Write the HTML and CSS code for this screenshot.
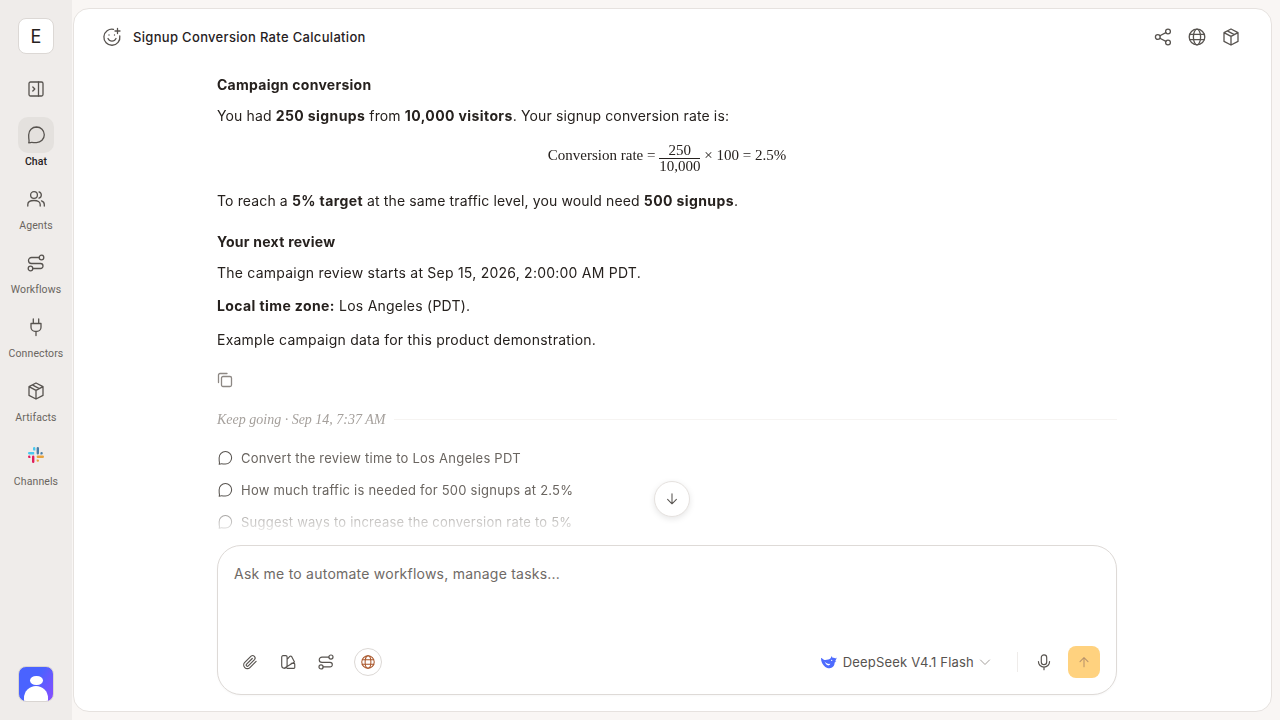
FILE: index.html
```html
<!DOCTYPE html>
<html lang="en">
<head>
    <meta charset="UTF-8">
    <title>Signup Conversion Rate Calculation</title>
    <link rel="stylesheet" href="styles.css">
</head>
<body>
    <aside class="sidebar">
        <div class="brand">E</div>
        <button class="toggle">
            <svg class="icon" viewBox="0 0 20 20"><rect x="3" y="3" width="14" height="14" rx="1.500"/><path d="M12.500 3v14M6.800 8l2 2-2 2"/></svg>
        </button>
        <nav class="nav">
            <div class="nav-item active">
                <div class="nav-icon"><svg class="icon" viewBox="0 0 20 20"><path d="M10.500 2a7.800 7.800 0 0 1 0 15.600c-1.200 0-3.800-.1-4.800-.3-.8-.1-3 .6-3 .6s.6-1.900.3-2.900C2.600 13.700 2.700 11.200 2.700 9.800A7.800 7.800 0 0 1 10.500 2z"/></svg></div>
                <span>Chat</span>
            </div>
            <div class="nav-item">
                <div class="nav-icon"><svg class="icon" viewBox="0 0 20 20"><circle cx="8" cy="6" r="3.400"/><path d="M1.800 17v-1.500c0-2.700 2.400-4 6.200-4s6.200 1.300 6.200 4V17M13 2.900a3.300 3.300 0 0 1 0 6.300M15.500 11.800c1.800.6 2.800 1.800 2.800 3.700V17"/></svg></div>
                <span>Agents</span>
            </div>
            <div class="nav-item">
                <div class="nav-icon"><svg class="icon" viewBox="0 0 20 20"><circle cx="15.500" cy="4.500" r="2.300"/><circle cx="4.500" cy="15.500" r="2.300"/><path d="M13.200 4.500H5.500a3 3 0 0 0 0 6h9a2.500 2.500 0 0 1 0 5H6.800"/></svg></div>
                <span>Workflows</span>
            </div>
            <div class="nav-item">
                <div class="nav-icon"><svg class="icon" viewBox="0 0 20 20"><path d="M7.300 2v4.500M12.700 2v4.500M5 6.500h10v3.800a4 4 0 0 1-4 4H9a4 4 0 0 1-4-4zM10 14.300V18.500"/></svg></div>
                <span>Connectors</span>
            </div>
            <div class="nav-item">
                <div class="nav-icon"><svg class="icon" viewBox="0 0 20 20"><path d="M10 2l7 3.600v8.800L10 18l-7-3.600V5.600zM3 5.600l7 3.800 7-3.800M10 9.400V18M6.300 3.900l7 3.700"/></svg></div>
                <span>Artifacts</span>
            </div>
            <div class="nav-item">
                <div class="nav-icon">
                    <svg class="slack" viewBox="0 0 16 16">
                        <path fill="#36c5f0" d="M0 6.200c0-.7.6-1.200 1.200-1.200h5v2.400h-5C.6 7.400 0 6.900 0 6.200zM5 1.200a1.200 1.200 0 0 1 2.400 0v2.400H6.200A1.200 1.200 0 0 1 5 2.400z" opacity=".9"/>
                        <path fill="#4a7fa8" d="M8.600 1.200a1.200 1.200 0 0 1 2.400 0v5a1.200 1.200 0 0 1-2.400 0zM12.400 6.200a1.200 1.200 0 0 1 2.400 0 1.200 1.200 0 0 1-1.200 1.200h-1.200z"/>
                        <path fill="#e8a33d" d="M9.800 8.600h5a1.200 1.200 0 0 1 0 2.400h-5a1.200 1.200 0 0 1 0-2.400zM8.600 12.400h1.200a1.200 1.200 0 1 1-1.200 1.200z"/>
                        <path fill="#e01e5a" d="M1.200 8.600a1.200 1.200 0 0 1 1.200 1.200V11H1.200a1.200 1.200 0 0 1 0-2.400zM4 9.800a1.200 1.200 0 0 1 2.400 0v5a1.200 1.200 0 0 1-2.400 0z"/>
                    </svg>
                </div>
                <span>Channels</span>
            </div>
        </nav>
        <div class="avatar">
            <div class="avatar-head"></div>
            <div class="avatar-body"></div>
        </div>
    </aside>

    <main class="panel">
        <header class="topbar">
            <svg class="icon title-icon" viewBox="0 0 20 20"><path d="M11.500 2.400A8 8 0 1 0 17.800 9"/><path d="M15.500 1.500v5M13 4h5"/><path d="M6 11.500c.8 1.700 2.200 2.600 4 2.600s3.200-.9 4-2.600"/><circle class="dot" cx="7" cy="8" r=".7"/><circle class="dot" cx="12.500" cy="8" r=".7"/></svg>
            <h1 class="title">Signup Conversion Rate Calculation</h1>
            <div class="top-actions">
                <svg class="icon" viewBox="0 0 20 20"><circle cx="15" cy="4.500" r="2.400"/><circle cx="15" cy="15.500" r="2.400"/><circle cx="4.800" cy="10" r="2.400"/><path d="M6.900 8.800l6-3.200M6.900 11.200l6 3.200"/></svg>
                <svg class="icon" viewBox="0 0 20 20"><circle cx="10" cy="10" r="7.800"/><ellipse cx="10" cy="10" rx="3.600" ry="7.800"/><path d="M2.800 7.300h14.400M2.800 12.700h14.400"/></svg>
                <svg class="icon" viewBox="0 0 20 20"><path d="M10 2l7 3.600v8.800L10 18l-7-3.600V5.600zM3 5.600l7 3.800 7-3.800M10 9.400V18M6.300 3.900l7 3.700"/></svg>
            </div>
        </header>

        <div class="scroll-area">
            <div class="thread">
                <h3 class="heading">Campaign conversion</h3>
                <p class="tight">You had <b>250 signups</b> from <b>10,000 visitors</b>. Your signup conversion rate is:</p>
                <div class="math">
                    <span>Conversion rate =&nbsp;</span>
                    <span class="fraction"><span class="num">250</span><span class="den">10,000</span></span>
                    <span>&nbsp;× 100 = 2.5%</span>
                </div>
                <p class="tight">To reach a <b>5% target</b> at the same traffic level, you would need <b>500 signups</b>.</p>
                <h3 class="heading second">Your next review</h3>
                <p>The campaign review starts at Sep 15, 2026, 2:00:00 AM PDT.</p>
                <p class="gap"><b>Local time zone:</b> Los Angeles (PDT).</p>
                <p class="gap last">Example campaign data for this product demonstration.</p>
                <div class="copy">
                    <svg class="icon" viewBox="0 0 16 16"><rect x="4.500" y="4.500" width="10" height="10" rx="1.500"/><path d="M1.500 10.500V3A1.500 1.500 0 0 1 3 1.500h7"/></svg>
                </div>
                <div class="divider">
                    <span>Keep going · Sep 14, 7:37 AM</span>
                    <div class="line"></div>
                </div>
                <ul class="suggestions">
                    <li><svg class="icon" viewBox="0 0 20 20"><path d="M10.500 2a7.800 7.800 0 0 1 0 15.600c-1.200 0-3.800-.1-4.800-.3-.8-.1-3 .6-3 .6s.6-1.900.3-2.900C2.600 13.700 2.700 11.200 2.700 9.800A7.800 7.800 0 0 1 10.500 2z"/></svg>Convert the review time to Los Angeles PDT</li>
                    <li><svg class="icon" viewBox="0 0 20 20"><path d="M10.500 2a7.800 7.800 0 0 1 0 15.600c-1.200 0-3.800-.1-4.800-.3-.8-.1-3 .6-3 .6s.6-1.900.3-2.900C2.600 13.700 2.700 11.200 2.700 9.800A7.800 7.800 0 0 1 10.500 2z"/></svg>How much traffic is needed for 500 signups at 2.5%</li>
                    <li><svg class="icon" viewBox="0 0 20 20"><path d="M10.500 2a7.800 7.800 0 0 1 0 15.600c-1.200 0-3.800-.1-4.800-.3-.8-.1-3 .6-3 .6s.6-1.900.3-2.900C2.600 13.700 2.700 11.200 2.700 9.800A7.800 7.800 0 0 1 10.500 2z"/></svg>Suggest ways to increase the conversion rate to 5%</li>
                </ul>
            </div>
        </div>

        <button class="scroll-down">
            <svg class="icon" viewBox="0 0 20 20"><path d="M10 3.500v12.500M4.500 10.500l5.500 5.500 5.500-5.500"/></svg>
        </button>

        <div class="composer">
            <div class="placeholder">Ask me to automate workflows, manage tasks...</div>
            <div class="tools">
                <svg class="icon tool" viewBox="0 0 20 20"><path d="M16.800 9.300l-6.900 6.900a4 4 0 0 1-5.700-5.700l7-7a2.700 2.700 0 0 1 3.800 3.800l-6.900 7a1.300 1.300 0 0 1-1.900-1.900l6.300-6.300"/></svg>
                <svg class="icon tool" viewBox="0 0 20 20"><path d="M3 4.500A1.500 1.500 0 0 1 4.500 3h3A1.500 1.500 0 0 1 9 4.500V14a3 3 0 0 1-6 0zM9 7l3-3.200a1.400 1.400 0 0 1 2 0l3.200 6.200-11 6.700M9 17h7.500a1 1 0 0 0 1-1v-3.500a1 1 0 0 0-1-1h-3"/></svg>
                <svg class="icon tool" viewBox="0 0 20 20"><circle cx="15.500" cy="4.500" r="2.300"/><circle cx="4.500" cy="15.500" r="2.300"/><path d="M13.200 4.500H5.500a3 3 0 0 0 0 6h9a2.500 2.500 0 0 1 0 5H6.800"/></svg>
                <div class="web-toggle">
                    <svg class="icon" viewBox="0 0 20 20"><circle cx="10" cy="10" r="7.800"/><ellipse cx="10" cy="10" rx="3.600" ry="7.800"/><path d="M2.800 7.300h14.400M2.800 12.700h14.400"/></svg>
                </div>
                <div class="model">
                    <svg class="whale" viewBox="0 0 18 14"><path d="M17.500 1.800c-.6-.3-.9.300-1.300.6-.9-.9-2-1-3.100-.6-.2-1-.9-1.500-1.700-1.700.3 1-.1 1.500-.6 2C9.500 3.500 5 4.600 3.200 3.800 2 3 1.300 2.300.5 1.900.2 1.800 0 2 0 2.300c.1 3.800 1.500 7.300 4.800 9.700 2.100 1.400 5 1.900 7 1 2-1 3.400-2.800 3.600-6 .4-.4 1.400-.6 1.800-1.400-.5.100-1 .2-1.400.1.600-1 1.600-2.700 1.700-3.900z"/><path class="whale-cut" d="M4 5.500c1.500 2.500 4 3.500 6.500 3-.5 1.500-2 2-3 1.700C6 9.700 4.600 7.500 4 5.500zM12 3.800a.8.8 0 1 1 0 1.600.8.8 0 0 1 0-1.600z"/></svg>
                    <span>DeepSeek V4.1 Flash</span>
                    <svg class="icon chevron" viewBox="0 0 12 12"><path d="M1.500 4l4.500 4.500L10.500 4"/></svg>
                </div>
                <div class="sep"></div>
                <svg class="icon mic" viewBox="0 0 20 20"><rect x="7" y="2" width="6" height="11" rx="3"/><path d="M3.800 9.500a6.200 6.200 0 0 0 12.400 0M10 15.800V18.500"/></svg>
                <button class="send">
                    <svg class="icon" viewBox="0 0 20 20"><path d="M10 16V4.500M5 9.500l5-5 5 5"/></svg>
                </button>
            </div>
        </div>
    </main>
</body>
</html>
```

FILE: styles.css
```css
* {
    box-sizing: border-box;
}
html, body {
    height: 100%;
}
body {
    margin: 0;
    display: flex;
    height: 720px;
    overflow: hidden;
    background-color: #f9f6f4;
    color: #26211e;
    font-family: Inter, "Liberation Sans", sans-serif;
    letter-spacing: 0.23px;
}
.icon {
    fill: none;
    stroke: #57534f;
    stroke-width: 1.3;
    stroke-linecap: round;
    stroke-linejoin: round;
    width: 20px;
    height: 20px;
    display: block;
}
.icon .dot {
    fill: #57534f;
    stroke: none;
}
button {
    border: none;
    background: none;
    padding: 0;
    font: inherit;
}

/* sidebar */
.sidebar {
    width: 72px;
    flex-shrink: 0;
    background-color: #efecea;
    display: flex;
    flex-direction: column;
    align-items: center;
    padding: 18px 0 18px;
}
.brand {
    width: 36px;
    height: 36px;
    background: #fff;
    border: 1px solid #dcd8d5;
    border-radius: 8px;
    display: flex;
    align-items: center;
    justify-content: center;
    font-size: 18px;
    color: #26211e;
}
.toggle {
    margin-top: 17px;
    width: 36px;
    height: 36px;
    display: flex;
    align-items: center;
    justify-content: center;
}
.nav {
    margin-top: 10px;
    display: flex;
    flex-direction: column;
    gap: 8px;
    align-items: center;
}
.nav-item {
    width: 72px;
    height: 56px;
    display: flex;
    flex-direction: column;
    align-items: center;
    font-size: 10.5px;
    line-height: 14px;
    color: #6a6560;
    font-family: Roboto, Inter, sans-serif;
    font-weight: 400;
    letter-spacing: 0.1px;
}
.nav-item.active {
    color: #26211e;
    font-weight: 500;
}
.nav-icon {
    width: 36px;
    height: 36px;
    border-radius: 10px;
    display: flex;
    align-items: center;
    justify-content: center;
    margin-bottom: 2px;
}
.nav-item.active .nav-icon {
    background-color: #e4e1de;
}
.slack {
    width: 16px;
    height: 16px;
    display: block;
}
.avatar {
    margin-top: auto;
    width: 36px;
    height: 36px;
    border: 1px solid #d9d5d2;
    border-radius: 8px;
    background: linear-gradient(120deg, #4a63ff 45%, #8a4dff);
    overflow: hidden;
    display: flex;
    flex-direction: column;
    align-items: center;
    padding-top: 9px;
}
.avatar-head {
    width: 13px;
    height: 13px;
    background: #fff;
    border-radius: 50%;
}
.avatar-body {
    width: 24px;
    height: 20px;
    margin-top: 1px;
    background: #fff;
    border-radius: 12px 12px 0 0;
}

/* main panel */
.panel {
    position: relative;
    width: 1199px;
    height: 704px;
    margin: 8px 0 0 1px;
    background: #fff;
    border: 1px solid #e6e2df;
    border-radius: 16px;
    display: flex;
    flex-direction: column;
}
.topbar {
    height: 55px;
    flex-shrink: 0;
    display: flex;
    align-items: center;
    padding: 0 30px 0 28px;
}
.title-icon {
    margin-right: 11px;
}
.title {
    margin: 0;
    font-size: 13px;
    font-weight: 500;
    letter-spacing: 0.32px;
    color: #26211e;
}
.top-actions {
    margin-left: auto;
    display: flex;
    gap: 14px;
}

/* thread */
.scroll-area {
    flex: 1;
    min-height: 0;
    overflow: hidden;
    -webkit-mask-image: linear-gradient(to bottom, #000 calc(100% - 50px), transparent calc(100% - 8px));
    mask-image: linear-gradient(to bottom, #000 calc(100% - 50px), transparent calc(100% - 8px));
}
.thread {
    width: 900px;
    margin-left: 143px;
    padding-top: 11px;
    font-size: 14px;
    line-height: 20px;
}
.thread p {
    margin: 0;
}
.thread p.tight {
    letter-spacing: 0.13px;
}
.thread b {
    font-weight: 700;
    letter-spacing: 0.4px;
}
.heading {
    margin: 0 0 11px;
    font-size: 14px;
    font-weight: 700;
    letter-spacing: 0.26px;
    line-height: 20px;
}
.heading.second {
    margin-top: 21px;
}
.thread p.gap {
    margin-top: 13px;
}
.thread p.last {
    margin-top: 14px;
}
.math {
    display: flex;
    justify-content: center;
    align-items: center;
    font-family: "Liberation Serif", serif;
    font-size: 15px;
    letter-spacing: 0;
    line-height: 16px;
    margin: 12px 0 19px;
    height: 34px;
}
.fraction {
    display: inline-flex;
    flex-direction: column;
    align-items: center;
    line-height: 15px;
    margin-top: 6px;
}
.num {
    border-bottom: 1px solid #26211e;
    width: 100%;
    text-align: center;
}
.den {
    line-height: 14px;
}
.copy {
    margin-top: 22px;
}
.copy .icon {
    width: 16px;
    height: 16px;
    stroke: #8d8884;
}
.divider {
    display: flex;
    align-items: center;
    gap: 8px;
    margin-top: 22px;
    font-family: "Liberation Serif", serif;
    font-style: italic;
    font-size: 14px;
    letter-spacing: 0;
    color: #a5a09c;
}
.line {
    flex: 1;
    height: 1px;
    margin-bottom: 2px;
    background: #f6f4f2;
}
.suggestions {
    list-style: none;
    margin: 12px 0 0;
    padding: 0;
}
.suggestions li {
    display: flex;
    align-items: center;
    gap: 8px;
    height: 32px;
    font-size: 13px;
    color: #6a6560;
}
.suggestions .icon {
    width: 16px;
    height: 16px;
}
.scroll-down {
    position: absolute;
    left: 580px;
    top: 472px;
    width: 36px;
    height: 36px;
    border-radius: 50%;
    background: #fff;
    border: 1px solid #e6e2df;
    box-shadow: 0 2px 6px rgba(0, 0, 0, 0.1);
    display: flex;
    align-items: center;
    justify-content: center;
}
.scroll-down .icon {
    width: 16px;
    height: 16px;
}

/* composer */
.composer {
    width: 900px;
    height: 150px;
    flex-shrink: 0;
    margin: 0 0 16px 143px;
    border: 1px solid #dedad7;
    border-radius: 24px;
    background: #fff;
    padding: 18px 16px 16px;
    display: flex;
    flex-direction: column;
    box-shadow: 0 1px 2px rgba(0, 0, 0, 0.03);
}
.placeholder {
    font-size: 14px;
    line-height: 20px;
    color: #6f6a66;
}
.tools {
    margin-top: auto;
    display: flex;
    align-items: center;
    height: 32px;
}
.tool {
    width: 18px;
    height: 18px;
    margin-left: 7px;
    margin-right: 13px;
}
.web-toggle {
    width: 28px;
    height: 28px;
    margin-left: 6px;
    border: 1px solid #dcd8d5;
    border-radius: 50%;
    display: flex;
    align-items: center;
    justify-content: center;
}
.web-toggle .icon {
    width: 16px;
    height: 16px;
    stroke: #a9562a;
}
.model {
    margin-left: auto;
    display: flex;
    align-items: center;
    font-size: 13px;
    letter-spacing: 0.2px;
    color: #57534f;
}
.whale {
    width: 16px;
    height: 13px;
    margin-right: 6px;
    fill: #4d6bfe;
}
.whale-cut {
    fill: #fff;
}
.chevron {
    width: 12px;
    height: 12px;
    margin-left: 5px;
    stroke: #a5a09c;
    stroke-width: 1;
}
.sep {
    width: 1px;
    height: 20px;
    background: #efecea;
    margin: 0 17px 0 26px;
}
.mic {
    width: 18px;
    height: 18px;
}
.send {
    width: 32px;
    height: 32px;
    margin-left: 15px;
    background: #ffd27f;
    border-radius: 8px;
    display: flex;
    align-items: center;
    justify-content: center;
}
.send .icon {
    width: 16px;
    height: 16px;
    stroke: #b9936a;
}
```
